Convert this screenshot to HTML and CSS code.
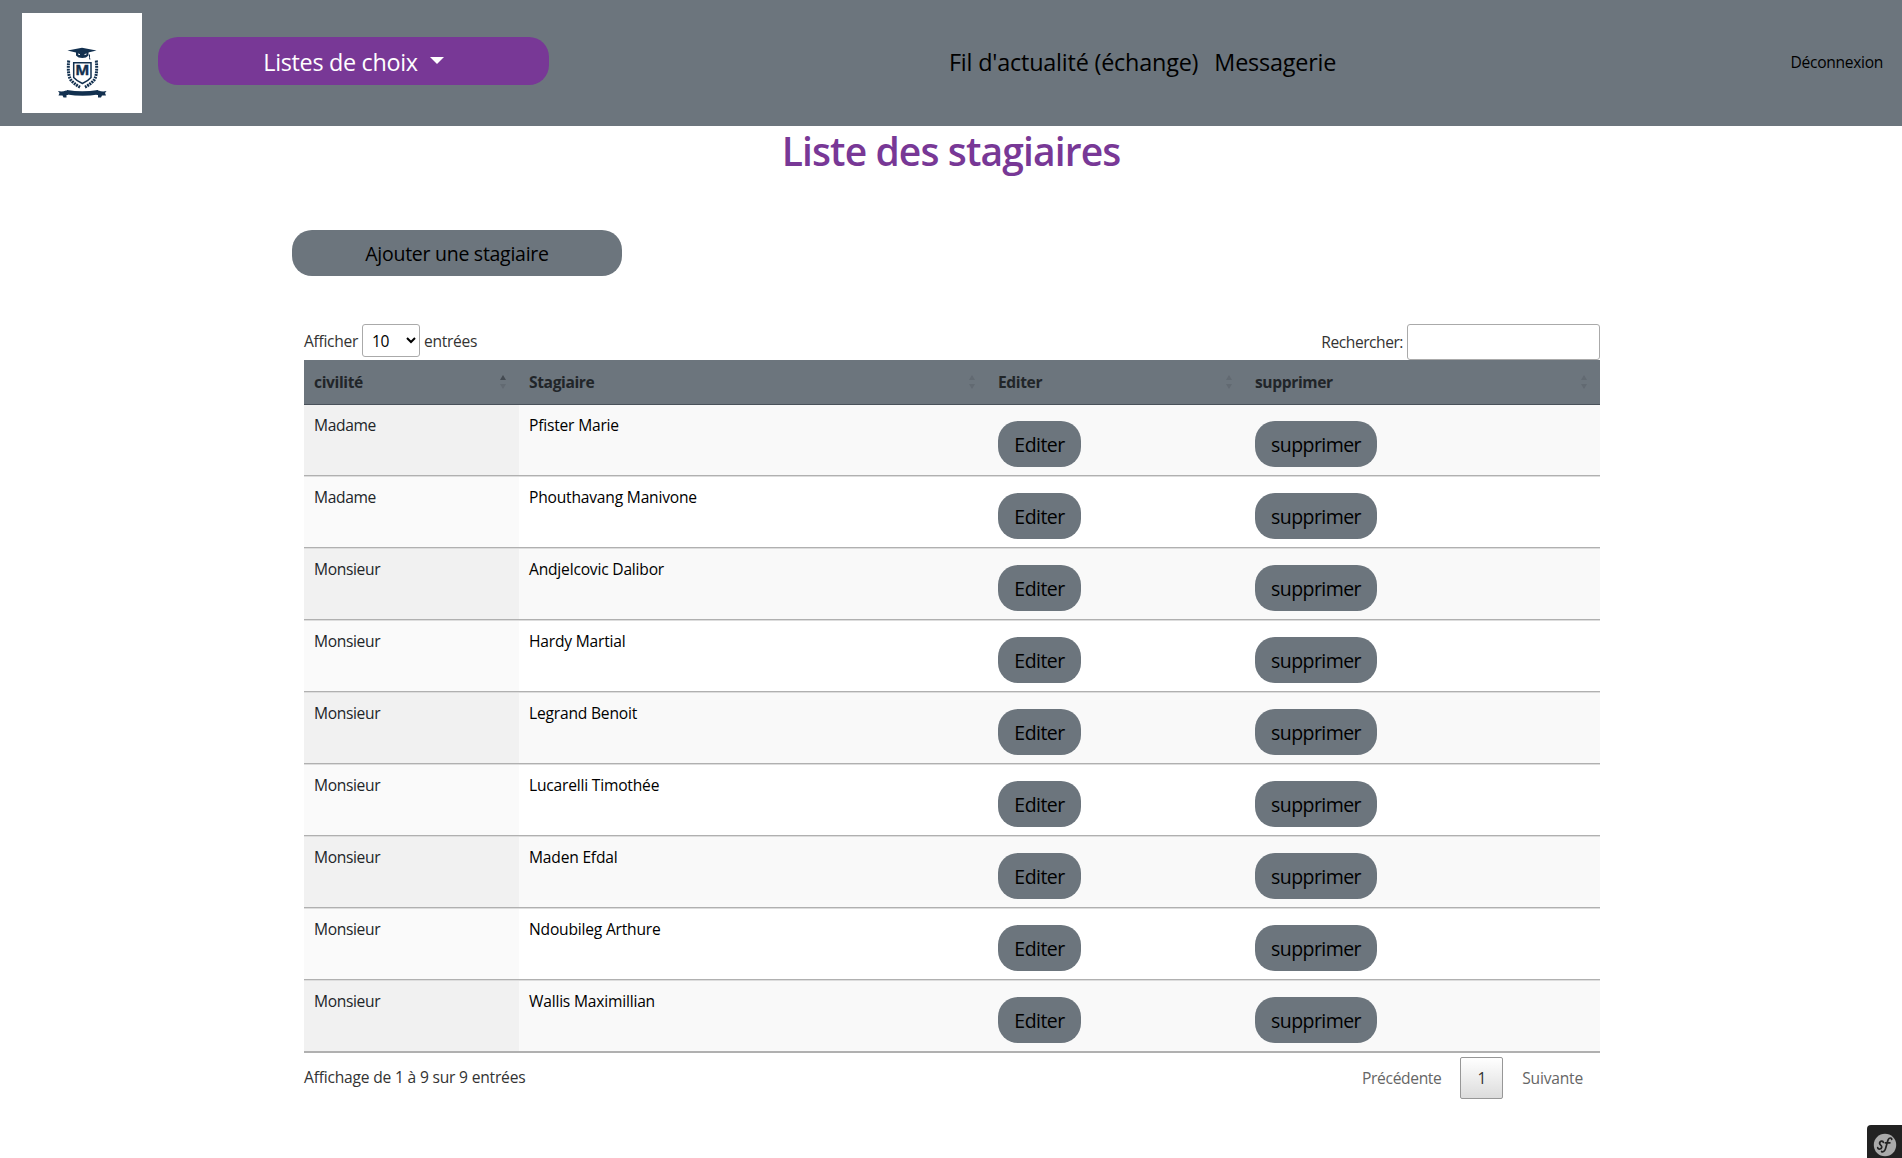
FILE: index.html
```html
<!DOCTYPE html>
<html lang="fr">
<head>
<meta charset="utf-8">
<title>Liste des stagiaires</title>
<link rel="stylesheet" href="styles.css">
</head>
<body>
<header class="topbar">
  <a class="logo" href="#">
    <svg viewBox="0 0 120 100" width="120" height="100" fill="#12304f">
      <path d="M45.500 37.500L60 34.800L74.500 37.500L60 41Z"/>
      <path d="M54 38.500h12.500v4q-2 2.500-6.200 2.500t-6.300-2.500Z"/>
      <path d="M56 41l2 .6M62.500 41.600l2-.6" stroke="#fff" stroke-width="1"/>
      <path d="M67.500 41.500v3l.4 2" fill="none" stroke="#12304f" stroke-width="1"/>
      <path d="M51.700 49.700h17.300v14.800q-3 3.500-8.600 6q-5.700-2.500-8.700-6Z" fill="none" stroke="#12304f" stroke-width="1.500"/>
      <text class="logo-letter" x="60.300" y="62.300" text-anchor="middle">M</text>
      <path d="M46.700 47.500q-1.500 16 3 20.500t9 6.500M74.300 47.500q1.500 16-3 20.500t-9 6.500" fill="none" stroke="#12304f" stroke-width="3" stroke-dasharray="1.900 .8"/>
      <path d="M45 77q15 2.500 31 0v4.500q-15 2.500-31 0Z"/>
      <path d="M36 78q4 1.200 8-.5h2v4.500h-1.500v2.500h-3l-1-2h-4l1-2.500ZM84.500 78q-4 1.200-8-.5h-2v4.500h1.500v2.500h3l1-2h4l-1-2.500Z"/>
    </svg>
  </a>
  <button class="choices">Listes de choix<span class="caret"></span></button>
  <nav class="links"><a href="#">Fil d'actualité (échange)</a><a href="#">Messagerie</a></nav>
  <a class="logout" href="#">Déconnexion</a>
</header>
<main>
  <h1>Liste des stagiaires</h1>
  <div class="container">
    <a class="pill add" href="#">Ajouter une stagiaire</a>
    <section class="listing">
      <div class="controls">
        <label class="length">Afficher <select><option>10</option></select> entrées</label>
        <label class="search">Rechercher:<input type="search"></label>
      </div>
      <table>
        <colgroup><col class="c1"><col class="c2"><col class="c3"><col class="c4"></colgroup>
        <thead>
          <tr>
            <th><div class="head">civilité<span class="sort asc"></span></div></th>
            <th><div class="head">Stagiaire<span class="sort"></span></div></th>
            <th><div class="head">Editer<span class="sort"></span></div></th>
            <th><div class="head">supprimer<span class="sort"></span></div></th>
          </tr>
        </thead>
        <tbody>
          <tr><td>Madame</td><td>Pfister Marie</td><td><a class="pill" href="#">Editer</a></td><td><a class="pill" href="#">supprimer</a></td></tr>
          <tr><td>Madame</td><td>Phouthavang Manivone</td><td><a class="pill" href="#">Editer</a></td><td><a class="pill" href="#">supprimer</a></td></tr>
          <tr><td>Monsieur</td><td>Andjelcovic Dalibor</td><td><a class="pill" href="#">Editer</a></td><td><a class="pill" href="#">supprimer</a></td></tr>
          <tr><td>Monsieur</td><td>Hardy Martial</td><td><a class="pill" href="#">Editer</a></td><td><a class="pill" href="#">supprimer</a></td></tr>
          <tr><td>Monsieur</td><td>Legrand Benoit</td><td><a class="pill" href="#">Editer</a></td><td><a class="pill" href="#">supprimer</a></td></tr>
          <tr><td>Monsieur</td><td>Lucarelli Timothée</td><td><a class="pill" href="#">Editer</a></td><td><a class="pill" href="#">supprimer</a></td></tr>
          <tr><td>Monsieur</td><td>Maden Efdal</td><td><a class="pill" href="#">Editer</a></td><td><a class="pill" href="#">supprimer</a></td></tr>
          <tr><td>Monsieur</td><td>Ndoubileg Arthure</td><td><a class="pill" href="#">Editer</a></td><td><a class="pill" href="#">supprimer</a></td></tr>
          <tr><td>Monsieur</td><td>Wallis Maximillian</td><td><a class="pill" href="#">Editer</a></td><td><a class="pill" href="#">supprimer</a></td></tr>
        </tbody>
      </table>
      <div class="table-footer">
        <div class="info">Affichage de 1 à 9 sur 9 entrées</div>
        <div class="paging"><a class="page">Précédente</a><a class="page current">1</a><a class="page">Suivante</a></div>
      </div>
    </section>
  </div>
</main>
<div class="toolbar-badge">
  <svg viewBox="0 0 24 24" width="24" height="24">
    <circle cx="12" cy="12" r="11.200" fill="#aaa"/>
    <path d="M10.300 9.300c-.2-1.300-2.300-1.500-3.200-.4c-1.200 1.500-.3 2.500.8 3.400c1.400 1.100 1 3.400-1 3.700c-1.300.2-2.300-.4-2.200-1.300M18.700 6.300c.2-1.700-2.400-1.900-3.500.3c-1.200 2.700-1.800 6.800-3 9.900c-.8 2-2.600 2.900-3.600 2M12.300 9.800h4.600" fill="none" stroke="#222" stroke-width="1.700" stroke-linecap="round"/>
  </svg>
</div>
</body>
</html>
```
FILE: styles.css
```css
* { box-sizing: border-box; }
body {
  margin: 0;
  min-height: 1158px;
  background: #fff;
  color: #212529;
  font: 15.6px/24px "Open Sans", "Noto Sans", sans-serif;
  letter-spacing: -0.2px;
}
a { color: inherit; text-decoration: none; }

.topbar {
  display: flex;
  align-items: center;
  height: 126px;
  padding: 0 18px 0 22px;
  background: #6c757d;
  color: #000;
}
.logo { width: 120px; height: 100px; background: #fff; }
.logo svg { display: block; }
.logo-letter { font: 700 15px "Open Sans", sans-serif; letter-spacing: 0; stroke: #12304f; stroke-width: .4px; }
.choices {
  display: flex;
  align-items: center;
  justify-content: center;
  width: 391px;
  height: 48px;
  margin: -4px 0 0 16px;
  padding: 2px 0 0;
  border: 0;
  border-radius: 20px;
  background: #783896;
  color: #fff;
  font: 23.4px/46px "Open Sans", "Noto Sans", sans-serif;
  letter-spacing: -0.33px;
}
.caret {
  margin: -4px 0 0 12px;
  border: 7.2px solid transparent;
  border-top-color: #fff;
  border-bottom: 0;
}
.links {
  display: flex;
  gap: 16px;
  margin: -2px auto 0 400px;
  font-size: 23.4px;
  letter-spacing: -0.2px;
}
.logout { margin-top: -3px; padding-right: 1px; letter-spacing: -0.31px; }

h1 {
  margin: 0;
  padding: 1px 0 0;
  color: #783896;
  font-size: 39px;
  font-weight: 550;
  line-height: 48px;
  text-align: center;
  letter-spacing: -0.88px;
}
.container { width: 1320px; margin: 55px 0 0 292px; }
.pill {
  display: block;
  width: max-content;
  min-width: 83px;
  padding: 2px 16px 0;
  border-radius: 20px;
  background: #6c757d;
  color: #000;
  font-size: 19.5px;
  line-height: 44px;
  text-align: center;
  letter-spacing: -0.55px;
}
.add { width: 330px; letter-spacing: -0.27px; }
.listing { padding: 48px 12px 0; }
.controls { display: flex; justify-content: space-between; height: 36px; color: #333; }
.length { display: flex; align-items: center; gap: 4px; height: 33px; letter-spacing: -0.31px; }
select {
  width: 58px;
  height: 33px;
  padding: 4px 4px 4px 5px;
  border: 1px solid #aaa;
  border-radius: 3px;
  background: transparent;
  color: #000;
  font: inherit;
  letter-spacing: inherit;
}
.search { display: flex; align-items: center; letter-spacing: -0.47px; }
.search input {
  width: 193px;
  height: 36px;
  margin-left: 4px;
  border: 1px solid #aaa;
  border-radius: 3px;
}

table { width: 1296px; table-layout: fixed; border-collapse: separate; border-spacing: 0; border-bottom: 1px solid #b0b0b0; }
.c1 { width: 215px; }
.c2 { width: 469px; }
.c3 { width: 257px; }
.c4 { width: 355px; }
th {
  height: 45px;
  padding: 0 13px 0 10px;
  border-bottom: 1px solid #49515a;
  background: #6c757d;
  text-align: left;
  font-weight: 700;
  letter-spacing: -0.38px;
}
.head { display: flex; align-items: center; justify-content: space-between; }
.sort { display: flex; flex-direction: column; gap: 4px; }
.sort::before, .sort::after { content: ""; border: 3px solid transparent; }
.sort::before { border-bottom: 5px solid #626a72; border-top: 0; }
.sort::after { border-top: 5px solid #626a72; border-bottom: 0; }
.asc::before { border-bottom-color: #444b52; }

td {
  height: 72px;
  padding: 8px 10px 0;
  border-top: 1px solid #ddd;
  border-bottom: 1px solid #b0b0b0;
  vertical-align: top;
  color: #000;
}
tbody tr:first-child td { height: 71px; border-top: 0; }
tbody tr:nth-child(odd) td { background: #f9f9f9; }
tbody tr td:first-child { background: #fafafa; color: #212529; letter-spacing: -0.35px; }
tbody tr:nth-child(odd) td:first-child { background: #f1f1f1; }
td .pill { margin-top: 8px; }

.table-footer { display: flex; justify-content: space-between; color: #333; }
.info { padding-top: 12px; }
.paging { display: flex; gap: 2px; padding-top: 4px; color: #666; }
.page { padding: 8px 16px; border: 1px solid transparent; border-radius: 2px; }
.page:first-child { letter-spacing: -0.35px; }
.current {
  border-color: #979797;
  background: linear-gradient(#fff, #dcdcdc);
  color: #333;
}

.toolbar-badge {
  position: fixed;
  right: 0;
  bottom: 0;
  width: 35px;
  height: 33px;
  padding: 8px 0 0 6px;
  border-top-left-radius: 4px;
  background: #222;
}
.toolbar-badge svg { display: block; }
```
